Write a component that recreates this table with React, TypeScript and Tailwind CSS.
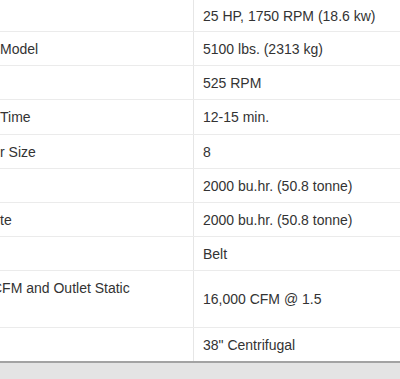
import React from 'react';

type Spec = { label: string; value: string; h: string; shift?: string; top?: boolean };

const SPECS: Spec[] = [
  { label: '', value: '25 HP, 1750 RPM (18.6 kw)', h: 'h-[32px]' },
  { label: 'Model', value: '5100 lbs. (2313 kg)', h: 'h-[34px]' },
  { label: '', value: '525 RPM', h: 'h-[34px]' },
  { label: 'Time', value: '12-15 min.', h: 'h-[35px]' },
  { label: 'r Size', value: '8', h: 'h-[34px]' },
  { label: '', value: '2000 bu.hr. (50.8 tonne)', h: 'h-[34px]' },
  { label: 'te', value: '2000 bu.hr. (50.8 tonne)', h: 'h-[34px]' },
  { label: '', value: 'Belt', h: 'h-[34px]' },
  { label: 'CFM and Outlet Static', value: '16,000 CFM @ 1.5', h: 'h-[57px]', shift: '-ml-[8px]', top: true },
  { label: '', value: '38" Centrifugal', h: 'h-[33px]' },
];

const SpecRow: React.FC<{ spec: Spec; last: boolean }> = ({ spec, last }) => (
  <div className={`grid grid-cols-[194px_1fr] ${spec.h} ${last ? '' : 'border-b border-[#ebebeb]'}`}>
    <div
      className={`flex overflow-hidden border-r border-[#e6e6e6] ${spec.top ? 'items-start pt-[7px]' : 'items-center'}`}
    >
      <span className={`whitespace-nowrap leading-5 ${spec.shift ?? ''}`}>{spec.label}</span>
    </div>
    <div className="flex items-center pl-[9px]">
      <span className="whitespace-nowrap leading-5">{spec.value}</span>
    </div>
  </div>
);

export default function App() {
  return (
    <div className="w-[400px] h-[379px] overflow-hidden flex flex-col bg-[#e4e4e4] font-['Liberation_Sans',Arial,sans-serif] text-[14px] text-[#333]">
      <div className="bg-white border-b-2 border-[#a3a3a3]">
        {SPECS.map((s, i) => (
          <SpecRow key={i} spec={s} last={i === SPECS.length - 1} />
        ))}
      </div>
      <div className="flex-1 bg-[#e4e4e4]" />
    </div>
  );
}
